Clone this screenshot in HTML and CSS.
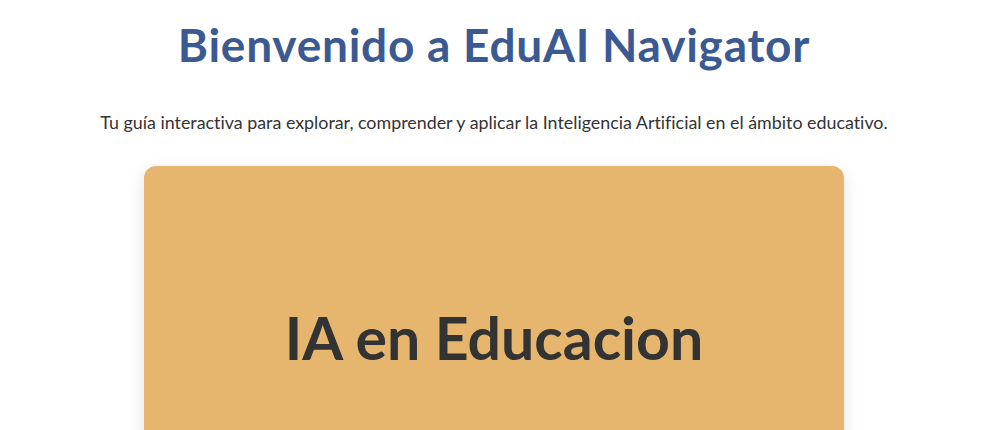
FILE: index.html
```html
<!DOCTYPE html>
<html lang="es">
<head>
<meta charset="utf-8">
<title>EduAI Navigator</title>
<link rel="stylesheet" href="styles.css">
</head>
<body>
<main class="page">
  <header class="hero">
    <h1 class="hero-title">Bienvenido a EduAI Navigator</h1>
    <p class="hero-lead">Tu guía interactiva para explorar, comprender y aplicar la Inteligencia Artificial en el ámbito educativo.</p>
  </header>
  <section class="topic-card">
    <h2 class="topic-title">IA en Educacion</h2>
  </section>
</main>
</body>
</html>
```
FILE: styles.css
```css
html, body {
  margin: 0;
  padding: 0;
  background: #ffffff;
}

body {
  font-family: Lato, "Open Sans", sans-serif;
  font-variant-ligatures: none;
  color: #333333;
}

.page {
  display: flex;
  flex-direction: column;
  align-items: center;
  padding: 16px 18px 0 22px;
}

.hero {
  text-align: center;
}

.hero-title {
  margin: 0;
  font-size: 46px;
  font-weight: 700;
  letter-spacing: 0.75px;
  color: #3b5a92;
  line-height: 58px;
}

.hero-lead {
  margin: 36px 0 0;
  font-size: 17.85px;
  line-height: 24px;
  color: #333333;
}

.topic-card {
  margin-top: 32px;
  width: 700px;
  min-height: 300px;
  background: #e6b66e;
  border-radius: 12px;
  box-shadow: 0 4px 16px rgba(0, 0, 0, 0.12);
  padding-top: 136px;
  box-sizing: border-box;
  text-align: center;
}

.topic-title {
  margin: 0;
  font-size: 59px;
  line-height: 72px;
  font-weight: 700;
  color: #333333;
}
```
